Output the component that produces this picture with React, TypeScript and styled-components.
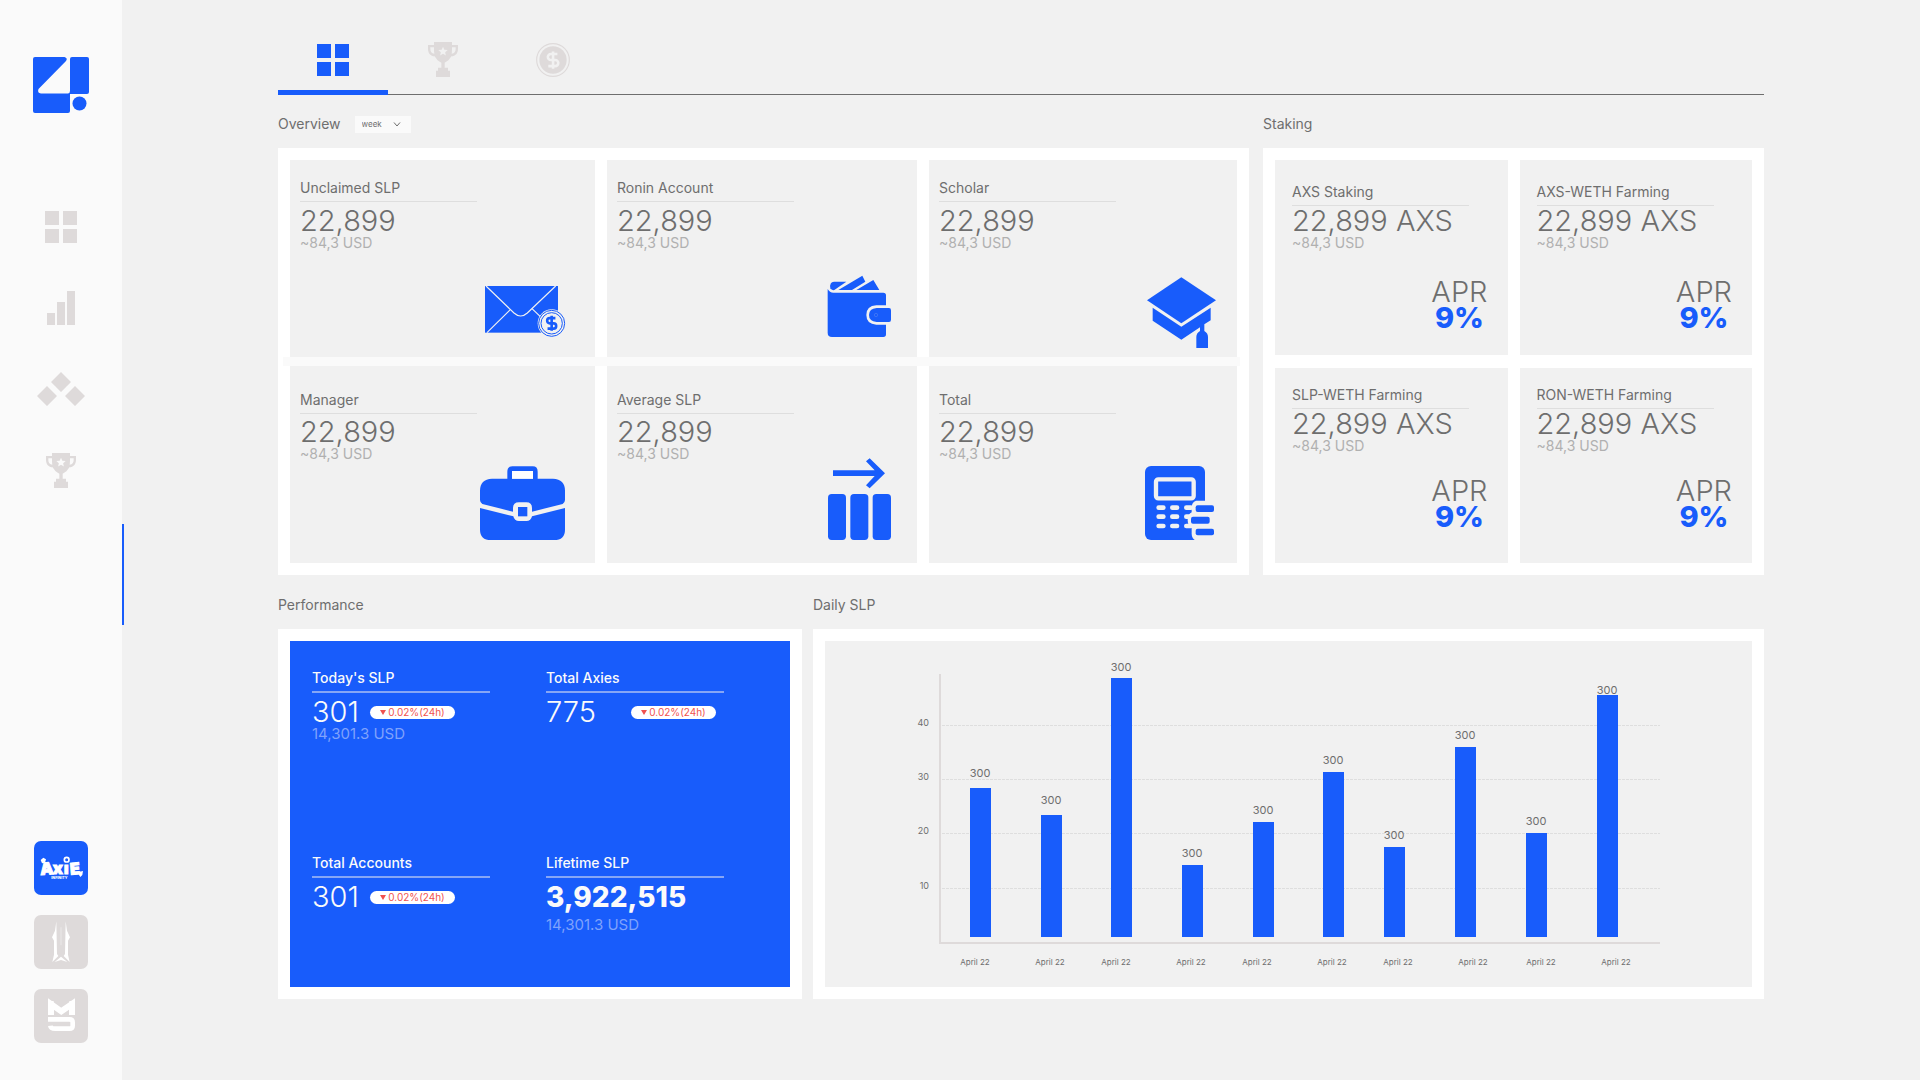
import React from "react";
import styled, { createGlobalStyle, css } from "styled-components";

const BLUE = "#185cfb";
const PAGE = "#f1f1f1";
const SOFT = "#fafafa";
const MUTED = "#dedada";
const INK = "#6e6e6e";
const FAINT = "#b0b0b0";
const RULE = "#dedede";

const GlobalStyle = createGlobalStyle`
  *, *::before, *::after { box-sizing: border-box; }
  body {
    margin: 0;
    background: ${PAGE};
    color: ${INK};
    font-family: Inter, "Liberation Sans", sans-serif;
    font-size: 14px;
    line-height: 18px;
  }
  h2, h3, p { margin: 0; font: inherit; }
  button { padding: 0; border: 0; background: none; cursor: pointer; }
  svg { display: block; }
`;

/* ---------- Layout ---------- */

const Shell = styled.div`
  display: flex;
  min-height: 100vh;
`;

const Sidebar = styled.aside`
  position: relative;
  flex: none;
  display: flex;
  flex-direction: column;
  align-items: center;
  width: 122px;
  padding: 57px 0 37px;
  background: ${SOFT};
`;

const ActiveMarker = styled.span`
  position: absolute;
  top: 524px;
  left: 100%;
  width: 2px;
  height: 101px;
  background: ${BLUE};
`;

const Nav = styled.nav`
  display: flex;
  flex-direction: column;
  gap: 41px;
  margin-top: 94px;
`;

const NavLink = styled.a`
  display: grid;
  place-items: center;
  width: 56px;
  height: 40px;
  color: ${MUTED};
`;

const Games = styled.div`
  display: flex;
  flex-direction: column;
  gap: 20px;
  margin-top: auto;
`;

const GameButton = styled.button<{ $active?: boolean }>`
  width: 54px;
  height: 54px;
  border-radius: 7px;
  overflow: hidden;
  background: ${(p) => (p.$active ? BLUE : MUTED)};
`;

const Main = styled.main`
  flex: 1;
  min-width: 0;
  padding: 0 156px 80px;
`;

const Tabs = styled.div`
  display: flex;
  height: 95px;
  border-bottom: 1px solid ${INK};
`;

const Tab = styled.button<{ $active?: boolean }>`
  display: flex;
  justify-content: center;
  align-items: center;
  width: 110px;
  height: 95px;
  padding-top: 29px;
  border-bottom: 5px solid ${(p) => (p.$active ? BLUE : "transparent")};
  color: ${(p) => (p.$active ? BLUE : MUTED)};
`;

const Board = styled.div`
  display: flex;
  flex-direction: column;
  gap: 1px;
`;

const TopRow = styled.div`
  display: grid;
  grid-template-columns: minmax(0, 971fr) minmax(0, 501fr);
  column-gap: 14px;
`;

const BottomRow = styled.div`
  display: grid;
  grid-template-columns: minmax(0, 524fr) minmax(0, 951fr);
  column-gap: 11px;
`;

const Section = styled.section`
  display: flex;
  flex-direction: column;
`;

const SectionHead = styled.header`
  display: flex;
  align-items: center;
  gap: 14px;
  height: 53px;
  padding: 20px 0 15px;
`;

const panel = css`
  flex: 1;
  padding: 12px;
  background: #fff;
`;

/* ---------- Period select ---------- */

const SelectBox = styled.div`
  display: grid;
  align-items: center;
  width: 56px;
  height: 17px;
  background: ${SOFT};

  > * { grid-area: 1 / 1; }
  > svg { justify-self: end; margin-right: 10px; pointer-events: none; }
`;

const Select = styled.select`
  appearance: none;
  width: 100%;
  height: 17px;
  padding: 0 7px;
  border: 0;
  background: none;
  color: ${INK};
  font: 400 8px/17px Inter, "Liberation Sans", sans-serif;
`;

/* ---------- Shared figures ---------- */

const CardTitle = styled.h3`
  width: 177px;
  padding-bottom: 4px;
  border-bottom: 1px solid ${RULE};
`;

const Figure = styled.p<{ $gap: number; $heavy?: boolean }>`
  margin-top: ${(p) => p.$gap}px;
  font-size: ${(p) => (p.$heavy ? 28 : 29)}px;
  line-height: 26px;
  font-weight: ${(p) => (p.$heavy ? 800 : 300)};
  white-space: nowrap;
`;

const Converted = styled.p`
  color: ${FAINT};
`;

/* ---------- Overview ---------- */

const OverviewPanel = styled.div`
  ${panel}
  display: grid;
  grid-template-columns: minmax(0, 305fr) minmax(0, 310fr) minmax(0, 308fr);
  column-gap: 12px;
`;

const StatCard = styled.article<{ $top: number }>`
  display: flex;
  justify-content: space-between;
  min-height: 197px;
  padding: ${(p) => p.$top}px 20px 9px 10px;
  background: ${PAGE};

  > svg { flex: none; align-self: flex-end; margin-top: -20px; }
`;

const StatText = styled.div`
  width: 177px;
`;

const Divider = styled.div`
  grid-column: 1 / -1;
  height: 9px;
  margin: 0 -3px 0 -7px;
  background: ${SOFT};
`;

/* ---------- Staking ---------- */

const StakingPanel = styled.div`
  ${panel}
  display: grid;
  grid-template-columns: repeat(2, minmax(0, 1fr));
  gap: 13px 12px;
`;

const StakeCard = styled.article<{ $top: number; $bottom: number }>`
  display: flex;
  flex-direction: column;
  min-height: 195px;
  padding: ${(p) => p.$top}px 20px ${(p) => p.$bottom}px 17px;
  background: ${PAGE};
`;

const Rate = styled.div`
  align-self: flex-end;
  margin-top: auto;
  font-size: 29px;
  line-height: 26px;
  font-weight: 300;
  text-align: center;
`;

const RateValue = styled.p`
  color: ${BLUE};
  font-weight: 800;
`;

/* ---------- Performance ---------- */

const PlainPanel = styled.div`
  ${panel}
`;

const PerformanceCard = styled.div`
  display: grid;
  grid-template-columns: minmax(0, 234fr) minmax(0, 244fr);
  grid-auto-rows: 185px;
  height: 100%;
  min-height: 346px;
  max-height: 346px;
  padding: 28px 0 0 22px;
  background: ${BLUE};
  color: ${SOFT};
`;

const MetricTitle = styled(CardTitle)`
  width: 178px;
  border-bottom: 2px solid #86a6f5;
  font-weight: 500;
`;

const MetricLine = styled.div`
  display: flex;
  align-items: center;
`;

const MetricValue = styled(Figure)<{ $width: number }>`
  min-width: ${(p) => p.$width}px;
`;

const MetricConverted = styled.p<{ $gap: number }>`
  margin-top: ${(p) => p.$gap}px;
  color: #7fa2fc;
  font-size: 15px;
`;

const Change = styled.span`
  display: inline-flex;
  align-items: center;
  justify-content: center;
  gap: 2px;
  width: 85px;
  height: 13px;
  margin-top: 6px;
  border-radius: 7px;
  background: #fff;
  color: #f0524f;
  font-size: 10px;
  line-height: 13px;
`;

/* ---------- Chart ---------- */

const Chart = styled.svg`
  width: 100%;
  height: auto;
  background: ${PAGE};
  font-family: Inter, "Liberation Sans", sans-serif;
  fill: ${INK};
`;

/* ---------- Icons ---------- */

const GridIcon = () => (
  <svg width="32" height="32" viewBox="0 0 32 32" fill="currentColor" aria-hidden>
    <path d="M0 0h14v14H0zM18 0h14v14H18zM0 18h14v14H0zM18 18h14v14H18z" />
  </svg>
);

const TrophyIcon = ({ star }: { star: string }) => (
  <svg width="30" height="35" viewBox="0 0 90 105" fill="currentColor" aria-hidden>
    <path
      fillRule="evenodd"
      d="M18 0H72V9H90V20C90 34 82 42 70 43C65 52 58 59 50 62V77H60V86H66V105H24V86H30V77H40V62C32 59 25 52 20 43C8 42 0 34 0 20V9H18ZM7 16V21C7 29 11 34 19 35C18 30 18 24 18 16ZM83 16H72C72 24 72 30 71 35C79 34 83 29 83 21Z"
    />
    <path fill={star} d="M45 14l4 9 10 1-7.500 6.500 2 10-8.500-5-8.500 5 2-10L31 24l10-1z" />
  </svg>
);

const DOLLAR = "M12 2v20M17 5H9.500a3.500 3.500 0 0 0 0 7h5a3.500 3.500 0 0 1 0 7H6.500";

const CoinIcon = () => (
  <svg width="34" height="34" viewBox="0 0 102 102" aria-hidden>
    <circle cx="51" cy="51" r="49" fill="none" stroke="currentColor" strokeWidth="3.500" />
    <circle cx="51" cy="51" r="41" fill="currentColor" />
    <g transform="translate(20 20) scale(2.600)">
      <path d={DOLLAR} fill="none" stroke={PAGE} strokeWidth="3" />
    </g>
  </svg>
);

const BarsIcon = () => (
  <svg width="28" height="34" viewBox="0 0 28 34" fill="currentColor" aria-hidden>
    <path d="M0 22h8v12H0zM10 11h8v23h-8zM20 0h8v34h-8z" />
  </svg>
);

const DiamondsIcon = () => (
  <svg width="48" height="34" viewBox="0 0 48 34" fill="currentColor" aria-hidden>
    <path d="M24 0l10 10-10 10L14 10zM10 14l10 10-10 10L0 24zM38 14l10 10-10 10-10-10z" />
  </svg>
);

const BrandLogo = () => (
  <svg width="56" height="56" viewBox="0 0 56 56" fill={BLUE} role="img" aria-label="Brand">
    <path d="M2 0H31.500Q35 1 33 4L5.500 32Q4 36 8 36.500H37V54Q37 56 35 56H2Q0 56 0 54V2Q0 0 2 0Z" />
    <path d="M39 0H54Q56 0 56 2V35Q56 37 54 37H35Q37 36 37 34V2Q37 0 39 0Z" />
    <circle cx="46.500" cy="46.500" r="7" />
  </svg>
);

const AxieMark = () => (
  <svg width="54" height="54" viewBox="42 63 162 162" fill="#fff" role="img" aria-label="Axie Infinity">
    <g fontFamily="Inter, sans-serif" fontWeight="900" stroke="#fff" strokeWidth="3">
      <text x="60" y="164" fontSize="50" transform="rotate(-4 78 145)">A</text>
      <text x="98" y="163" fontSize="50">x</text>
      <text x="132" y="163" fontSize="46">ı</text>
      <text x="150" y="163" fontSize="48" transform="rotate(-5 165 145)">E</text>
    </g>
    <circle cx="140" cy="119" r="7" fill="none" stroke="#fff" strokeWidth="5" />
    <path d="M62 120l8-7 8 5-3 10-9 2zM176 156l13-3-2 12-6 6-4-6z" />
    <text x="94" y="178" fontFamily="Inter, sans-serif" fontWeight="800" fontSize="11">
      INFINITY
    </text>
  </svg>
);

const BladesMark = () => (
  <svg width="54" height="54" viewBox="42 285 162 162" fill="#fff" role="img" aria-label="Blades">
    <path d="M109 304L105 332L96 352L102 362V404L97 426L115 408L111 402Z" />
    <path d="M137 304L141 332L150 352L144 362V404L149 426L131 408L135 402Z" />
    <path d="M104 426L123 410L142 426L123 420Z" />
    <path d="M121 322h4v54h-4z" opacity=".3" />
  </svg>
);

const StackMark = () => (
  <svg width="54" height="54" viewBox="42 507 162 162" fill="none" stroke="#fff" role="img" aria-label="MS">
    <path d="M93 585V552L124 574L156 552V585" strokeWidth="18" />
    <path d="M84 543h17v20h-17zM148 543h17v20h-17z" fill="#fff" stroke="none" />
    <path d="M84 598H148Q158 598 158 607V617Q158 626 148 626H106Q92 626 91 617" strokeWidth="14" />
  </svg>
);

/* Every card illustration shares one 96x100 box in the card's lower right corner. */
const Art = ({ origin, children }: { origin: string; children: React.ReactNode }) => (
  <svg width="96" height="100" viewBox={`${origin} 288 300`} fill={BLUE} aria-hidden>
    {children}
  </svg>
);

const EnvelopeArt = () => (
  <Art origin="27 -66">
    <rect x="45" y="48" width="219" height="140" />
    <g fill="none" stroke={PAGE} strokeWidth="3.500">
      <path d="M48 48L132 129Q152 147 172 129L257 48" />
      <path d="M121 119L51 188M186 116L230 158" />
    </g>
    <circle cx="245" cy="160" r="42" fill={PAGE} />
    <g fill="none" stroke={BLUE}>
      <circle cx="245" cy="160" r="39" strokeWidth="3" />
      <circle cx="245" cy="160" r="32" strokeWidth="3" />
      <g transform="translate(218 133) scale(2.250)">
        <path d={DOLLAR} strokeWidth="3.500" />
      </g>
    </g>
  </Art>
);

const BriefcaseArt = () => (
  <Art origin="27 552">
    <path
      fillRule="evenodd"
      d="M112 626V605Q112 589 127 589H188Q203 589 203 605V626H249Q285 628 285 662V690Q285 697 278 702L186 725V714Q186 697 169 697H147Q129 697 129 714V725L37 702Q30 697 30 690V662Q30 628 66 626ZM126 603V626H189V603Z"
    />
    <path fill="#fff" d="M126 603h63v23h-63z" />
    <path d="M30 714L130 739Q133 753 147 753H169Q183 753 186 739L285 714V779Q285 810 252 810H63Q30 810 30 779Z" />
    <rect x="144" y="711" width="28" height="28" />
  </Art>
);

const WalletArt = () => (
  <Art origin="-27 -36">
    <path d="M61 85Q58 65 72 65H109L73 90Q65 92 61 85Z" />
    <path d="M85 90L157 47L166 65L126 90ZM139 90L190 60L208 90Z" />
    <path d="M53 87Q59 98 70 98H220Q228 98 228 106V136H199Q169 138 169 165Q169 192 199 194H228V223Q228 231 220 231H66Q53 231 53 218Z" />
    <path d="M200 144H237Q243 144 243 151V179Q243 186 237 186H200Q177 184 177 165Q177 146 200 144Z" />
    <circle cx="198" cy="165" r="5" fill="none" stroke="#5a87f2" strokeWidth="1.500" />
  </Art>
);

const FlowArt = () => (
  <Art origin="-27 582">
    <path d="M69 631H194L168 604L179 595L225 640L179 685L168 676L194 648H69Z" />
    <rect x="54" y="702" width="54" height="138" rx="11" />
    <rect x="121" y="702" width="54" height="138" rx="11" />
    <rect x="188" y="702" width="55" height="138" rx="11" />
  </Art>
);

const ScholarArt = () => (
  <Art origin="-27 -36">
    <path d="M154 52L258 121L154 190L51 121Z" />
    <path d="M68 143L154 200L242 143V181L223 193V213Q234 219 234 231V264H199V231Q199 219 210 213V202L154 239L68 182Z" />
  </Art>
);

const CalculatorArt = () => (
  <Art origin="-27 582">
    <rect x="45" y="618" width="180" height="222" rx="18" />
    <rect x="78" y="658" width="113" height="57" rx="7" fill={BLUE} stroke={PAGE} strokeWidth="13" />
    {[743, 770, 798].map((y) =>
      [93, 134, 176].map((x) => (
        <rect key={`${x}-${y}`} x={x - 14} y={y - 7} width="28" height="14" rx="7" fill={PAGE} />
      ))
    )}
    <path
      fill={PAGE}
      d="M226 722H198Q184 726 185 746V757Q173 764 173 781Q173 796 185 802V818Q184 836 198 842H226Z"
    />
    <rect x="197" y="736" width="55" height="20" rx="6" />
    <rect x="183" y="770" width="56" height="21" rx="6" />
    <rect x="197" y="806" width="55" height="20" rx="6" />
  </Art>
);

/* ---------- Data ---------- */

const stats = [
  { title: "Unclaimed SLP", Illustration: EnvelopeArt },
  { title: "Ronin Account", Illustration: WalletArt },
  { title: "Scholar", Illustration: ScholarArt },
  { title: "Manager", Illustration: BriefcaseArt },
  { title: "Average SLP", Illustration: FlowArt },
  { title: "Total", Illustration: CalculatorArt },
];

const stakes = ["AXS Staking", "AXS-WETH Farming", "SLP-WETH Farming", "RON-WETH Farming"];

/* x and top of each bar, baseline of its value, centre of its date */
const bars = [
  { x: 145, top: 147, value: 136, date: 150 },
  { x: 216, top: 174, value: 163, date: 225 },
  { x: 286, top: 37, value: 30, date: 291 },
  { x: 357, top: 224, value: 216, date: 366 },
  { x: 428, top: 181, value: 173, date: 432 },
  { x: 498, top: 131, value: 123, date: 507 },
  { x: 559, top: 206, value: 198, date: 573 },
  { x: 630, top: 106, value: 98, date: 648 },
  { x: 701, top: 192, value: 184, date: 716 },
  { x: 772, top: 54, value: 53, date: 791 },
];

const ticks = [
  { label: 40, y: 84 },
  { label: 30, y: 138 },
  { label: 20, y: 192 },
  { label: 10, y: 247 },
];

const StatItem = ({
  title,
  Illustration,
  top,
  gap,
}: {
  title: string;
  Illustration: React.FC;
  top: number;
  gap: number;
}) => (
  <StatCard $top={top}>
    <StatText>
      <CardTitle>{title}</CardTitle>
      <Figure $gap={gap}>22,899</Figure>
      <Converted>~84,3 USD</Converted>
    </StatText>
    <Illustration />
  </StatCard>
);

const ChangePill = () => (
  <Change>
    <svg width="6" height="5" viewBox="0 0 6 5" fill="currentColor" aria-hidden>
      <path d="M0 0h6L3 5z" />
    </svg>
    0.02%(24h)
  </Change>
);

const DailyChart = () => (
  <Chart viewBox="0 0 927 346" role="img" aria-label="Daily SLP">
    {ticks.map((t) => (
      <g key={t.label}>
        <path d={`M117 ${t.y + 0.5}H835`} stroke={RULE} strokeDasharray="3 1" />
        <text x="104" y={t.y + 1} fontSize="9" textAnchor="end">
          {t.label}
        </text>
      </g>
    ))}
    <path d="M115 33V302H835" fill="none" stroke={MUTED} strokeWidth="2" />
    {bars.map((b) => (
      <g key={b.x}>
        <rect x={b.x} y={b.top} width="21" height={296 - b.top} fill={BLUE} />
        <text x={b.x + 10} y={b.value} fontSize="11" textAnchor="middle">
          300
        </text>
        <text x={b.date} y="324" fontSize="8" textAnchor="middle">
          April 22
        </text>
      </g>
    ))}
  </Chart>
);

export default function App() {
  return (
    <>
      <GlobalStyle />
      <Shell>
        <Sidebar>
          <BrandLogo />
          <Nav aria-label="Main">
            <NavLink href="#dashboard" aria-label="Dashboard"><GridIcon /></NavLink>
            <NavLink href="#statistics" aria-label="Statistics"><BarsIcon /></NavLink>
            <NavLink href="#assets" aria-label="Assets"><DiamondsIcon /></NavLink>
            <NavLink href="#rewards" aria-label="Rewards"><TrophyIcon star={SOFT} /></NavLink>
          </Nav>
          <Games>
            <GameButton $active aria-label="Axie Infinity"><AxieMark /></GameButton>
            <GameButton aria-label="Blades"><BladesMark /></GameButton>
            <GameButton aria-label="MS"><StackMark /></GameButton>
          </Games>
          <ActiveMarker />
        </Sidebar>

        <Main>
          <Tabs role="tablist">
            <Tab $active role="tab" aria-selected="true" aria-label="Overview"><GridIcon /></Tab>
            <Tab role="tab" aria-selected="false" aria-label="Ranking"><TrophyIcon star={PAGE} /></Tab>
            <Tab role="tab" aria-selected="false" aria-label="Earnings"><CoinIcon /></Tab>
          </Tabs>

          <Board>
            <TopRow>
              <Section>
                <SectionHead>
                  <h2>Overview</h2>
                  <SelectBox>
                    <Select aria-label="Period" defaultValue="week">
                      <option value="week">week</option>
                      <option value="month">month</option>
                    </Select>
                    <svg width="8" height="5" viewBox="0 0 8 5" fill="none" stroke={INK} aria-hidden>
                      <path d="M1 .5l3 3.500 3-3.500" />
                    </svg>
                  </SelectBox>
                </SectionHead>
                <OverviewPanel>
                  {stats.slice(0, 3).map((s) => <StatItem key={s.title} {...s} top={19} gap={6} />)}
                  <Divider />
                  {stats.slice(3).map((s) => <StatItem key={s.title} {...s} top={25} gap={5} />)}
                </OverviewPanel>
              </Section>

              <Section>
                <SectionHead><h2>Staking</h2></SectionHead>
                <StakingPanel>
                  {stakes.map((title, i) => (
                    <StakeCard key={title} $top={i < 2 ? 23 : 18} $bottom={i < 2 ? 24 : 33}>
                      <CardTitle>{title}</CardTitle>
                      <Figure $gap={2}>22,899 AXS</Figure>
                      <Converted>~84,3 USD</Converted>
                      <Rate>
                        <p>APR</p>
                        <RateValue>9%</RateValue>
                      </Rate>
                    </StakeCard>
                  ))}
                </StakingPanel>
              </Section>
            </TopRow>

            <BottomRow>
              <Section>
                <SectionHead><h2>Performance</h2></SectionHead>
                <PlainPanel>
                  <PerformanceCard>
                    <div>
                      <MetricTitle>Today's SLP</MetricTitle>
                      <MetricLine>
                        <MetricValue $gap={6} $width={58}>301</MetricValue>
                        <ChangePill />
                      </MetricLine>
                      <MetricConverted $gap={0}>14,301.3 USD</MetricConverted>
                    </div>
                    <div>
                      <MetricTitle>Total Axies</MetricTitle>
                      <MetricLine>
                        <MetricValue $gap={6} $width={85}>775</MetricValue>
                        <ChangePill />
                      </MetricLine>
                    </div>
                    <div>
                      <MetricTitle>Total Accounts</MetricTitle>
                      <MetricLine>
                        <MetricValue $gap={6} $width={58}>301</MetricValue>
                        <ChangePill />
                      </MetricLine>
                    </div>
                    <div>
                      <MetricTitle>Lifetime SLP</MetricTitle>
                      <Figure $gap={6} $heavy>3,922,515</Figure>
                      <MetricConverted $gap={6}>14,301.3 USD</MetricConverted>
                    </div>
                  </PerformanceCard>
                </PlainPanel>
              </Section>

              <Section>
                <SectionHead><h2>Daily SLP</h2></SectionHead>
                <PlainPanel>
                  <DailyChart />
                </PlainPanel>
              </Section>
            </BottomRow>
          </Board>
        </Main>
      </Shell>
    </>
  );
}
